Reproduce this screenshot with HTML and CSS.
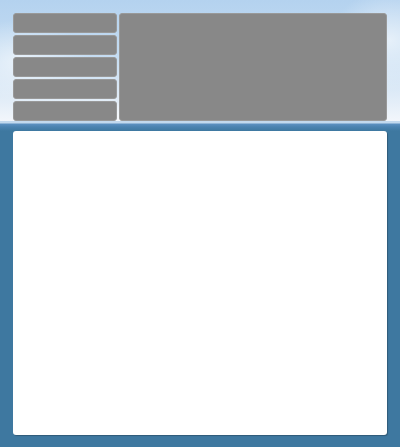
FILE: index.html
```html
<!DOCTYPE html>
<html lang="en">

<head>
    <meta charset="UTF-8">
    <meta name="viewport" content="width=device-width, initial-scale=1.0">
    <title>Layout</title>
    <link rel="stylesheet" href="styles.css">
</head>

<body>
    <div class="header">
        <div class="menu">
            <div class="menu-item"></div>
            <div class="menu-item"></div>
            <div class="menu-item"></div>
            <div class="menu-item"></div>
            <div class="menu-item"></div>
        </div>
        <div class="banner"></div>
    </div>

    <div class="main">
        <div class="panel"></div>
    </div>
</body>

</html>
```

FILE: styles.css
```css
body {
    margin: 0;
    height: 447px;
    overflow: hidden;
    background-color: #3e78a0;
    font-family: 'Liberation Sans', Arial, sans-serif;
}

.header {
    display: flex;
    gap: 2px;
    height: 108px;
    padding: 13px 13px 0;
    background:
        radial-gradient(ellipse 70px 40px at 20px 60px, rgba(255, 255, 255, 0.6), rgba(255, 255, 255, 0)),
        radial-gradient(ellipse 60px 50px at 390px 40px, rgba(255, 255, 255, 0.6), rgba(255, 255, 255, 0)),
        radial-gradient(ellipse 200px 20px at 200px 120px, rgba(255, 255, 255, 0.7), rgba(255, 255, 255, 0)),
        linear-gradient(to bottom, #b4d2ef 0%, #c4dcf2 45%, #e4eef8 85%, #f2f6fb 100%);
}

.menu {
    display: flex;
    flex-direction: column;
    gap: 2px;
    width: 104px;
}

.menu-item {
    flex: 1;
    background-color: #888;
    border: 1px solid #999;
    border-radius: 3px;
    box-sizing: border-box;
}

.banner {
    flex: 1;
    background-color: #888;
    border: 1px solid #999;
    border-radius: 3px;
}

.main {
    padding: 10px 13px 0;
    background: linear-gradient(to bottom, #c2d9ee 0, #c2d9ee 2px, #5b90c0 3px, #4a82b0 6px, #3e78a0 10px);
}

.panel {
    height: 304px;
    background-color: #fff;
    border-radius: 3px;
    box-shadow: 1px 1px 1px rgba(0, 0, 0, 0.25);
}
```
